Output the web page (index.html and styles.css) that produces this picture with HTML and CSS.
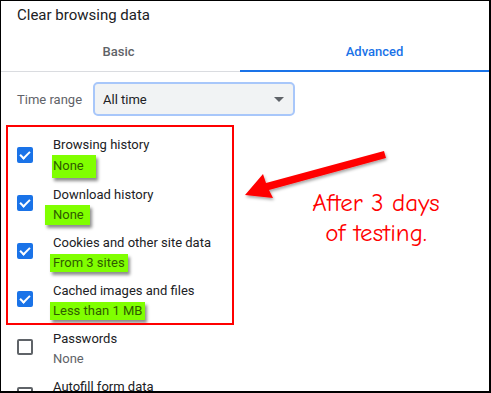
FILE: index.html
```html
<!DOCTYPE html>
<html lang="en">

<head>
    <meta charset="UTF-8">
    <meta name="viewport" content="width=device-width, initial-scale=1.0">
    <title>Clear browsing data</title>
    <link rel="stylesheet" href="styles.css">
</head>

<body>
    <div class="dialog">
        <div class="dialog-title">Clear browsing data</div>

        <div class="tabs">
            <div class="tab tab-basic">Basic</div>
            <div class="tab tab-active">Advanced</div>
        </div>

        <div class="time-range">
            <span class="time-label">Time range</span>
            <div class="select-box">
                <span>All time</span>
                <span class="select-arrow"></span>
            </div>
        </div>

        <div class="options">
            <div class="option">
                <span class="checkbox checked"></span>
                <div class="option-text">
                    <div class="option-label">Browsing history</div>
                    <div class="option-sub"><span class="mark mark-1">None</span></div>
                </div>
            </div>
            <div class="option">
                <span class="checkbox checked"></span>
                <div class="option-text">
                    <div class="option-label">Download history</div>
                    <div class="option-sub"><span class="mark mark-2">None</span></div>
                </div>
            </div>
            <div class="option">
                <span class="checkbox checked"></span>
                <div class="option-text">
                    <div class="option-label">Cookies and other site data</div>
                    <div class="option-sub"><span class="mark mark-3">From 3 sites</span></div>
                </div>
            </div>
            <div class="option">
                <span class="checkbox checked"></span>
                <div class="option-text">
                    <div class="option-label">Cached images and files</div>
                    <div class="option-sub"><span class="mark mark-3">Less than 1 MB</span></div>
                </div>
            </div>
            <div class="option">
                <span class="checkbox"></span>
                <div class="option-text">
                    <div class="option-label">Passwords</div>
                    <div class="option-sub">None</div>
                </div>
            </div>
            <div class="option">
                <span class="checkbox"></span>
                <div class="option-text">
                    <div class="option-label">Autofill form data</div>
                    <div class="option-sub">None</div>
                </div>
            </div>
        </div>

        <!-- annotation drawn on top of the screenshot -->
        <div class="red-box"></div>
        <svg class="arrow" width="160" height="60" viewBox="0 0 160 60">
            <defs>
                <filter id="shadow" x="-20%" y="-40%" width="140%" height="180%">
                    <feDropShadow dx="1" dy="2" stdDeviation="1.5" flood-color="#000" flood-opacity="0.35"/>
                </filter>
            </defs>
            <g filter="url(#shadow)">
                <polygon fill="#ff0000" points="145,4 147,11 30,43 34,51 6,48 24,27 27,36"/>
            </g>
        </svg>
        <div class="note">After 3 days<br>of testing.</div>
    </div>
</body>

</html>
```

FILE: styles.css
```css
body {
    margin: 0;
    font-family: Roboto, "Liberation Sans", sans-serif;
    background: #fff;
}

.dialog {
    position: relative;
    width: 491px;
    height: 393px;
    box-sizing: border-box;
    border-top: 1px solid #000;
    border-left: 1px solid #000;
    border-right: 2px solid #000;
    border-bottom: 2px solid #000;
    overflow: hidden;
    color: #202124;
}

.dialog-title {
    font-size: 15px;
    line-height: 20px;
    padding: 4px 16px 8px;
}

.tabs {
    display: flex;
    width: 508px;
    border-bottom: 1px solid #dadce0;
}

.tab {
    height: 38px;
    line-height: 38px;
    font-size: 13px;
    font-weight: 500;
    text-align: center;
    color: #5f6368;
    box-sizing: border-box;
}

.tab-basic {
    width: 239px;
    padding-right: 4px;
}

.tab-active {
    width: 269px;
    color: #1a73e8;
    border-bottom: 2px solid #1a73e8;
    line-height: 38px;
    height: 39px;
    margin-bottom: -1px;
}

.time-range {
    display: flex;
    align-items: center;
    padding: 10px 0 0 16px;
}

.time-label {
    font-size: 13px;
    color: #5f6368;
    width: 76px;
}

.select-box {
    display: flex;
    align-items: center;
    justify-content: space-between;
    width: 202px;
    height: 34px;
    box-sizing: border-box;
    padding: 0 9px 0 8px;
    background: #f1f3f4;
    border: 2px solid #a8c7fa;
    border-radius: 5px;
    font-size: 13px;
    color: #202124;
}

.select-arrow {
    width: 0;
    height: 0;
    border-left: 5px solid transparent;
    border-right: 5px solid transparent;
    border-top: 5px solid #5f6368;
}

.options {
    padding-top: 15px;
}

.option {
    display: flex;
    align-items: center;
    height: 48px;
    padding-left: 16px;
}

.option-text {
    padding-top: 3px;
}

.checkbox {
    width: 16px;
    height: 16px;
    box-sizing: border-box;
    border: 2px solid #5f6368;
    border-radius: 2px;
    margin-right: 20px;
    flex-shrink: 0;
    position: relative;
}

.checkbox.checked {
    background: #1a73e8;
    border-color: #1a73e8;
}

.checkbox.checked::after {
    content: "";
    position: absolute;
    left: 3px;
    top: 0px;
    width: 4px;
    height: 8px;
    border-right: 2px solid #fff;
    border-bottom: 2px solid #fff;
    transform: rotate(45deg);
}

.option-label {
    font-size: 13px;
    line-height: 20px;
}

.option-sub {
    font-size: 13px;
    line-height: 20px;
    color: #5f6368;
}

.mark {
    display: inline-block;
    background: #80ff00;
    color: #2f5c00;
    line-height: 18px;
    box-shadow: 2px 3px 3px rgba(0, 0, 0, 0.45);
}

.mark-1 {
    padding: 2px 12px 3px 1px;
    margin-left: -1px;
}

.mark-2 {
    padding: 1px 6px 1px 8px;
    margin-left: -8px;
}

.mark-3 {
    padding: 0 3px 0 3px;
    margin-left: -3px;
}

.red-box {
    position: absolute;
    left: 5px;
    top: 124px;
    width: 224px;
    height: 196px;
    border: 2px solid #ff0000;
}

.arrow {
    position: absolute;
    left: 238px;
    top: 146px;
}

.note {
    position: absolute;
    left: 295px;
    top: 187px;
    width: 160px;
    text-align: center;
    font-family: "Comic Sans MS", "Comic Neue", cursive;
    font-size: 25px;
    line-height: 30px;
    color: #ff0000;
}
```
